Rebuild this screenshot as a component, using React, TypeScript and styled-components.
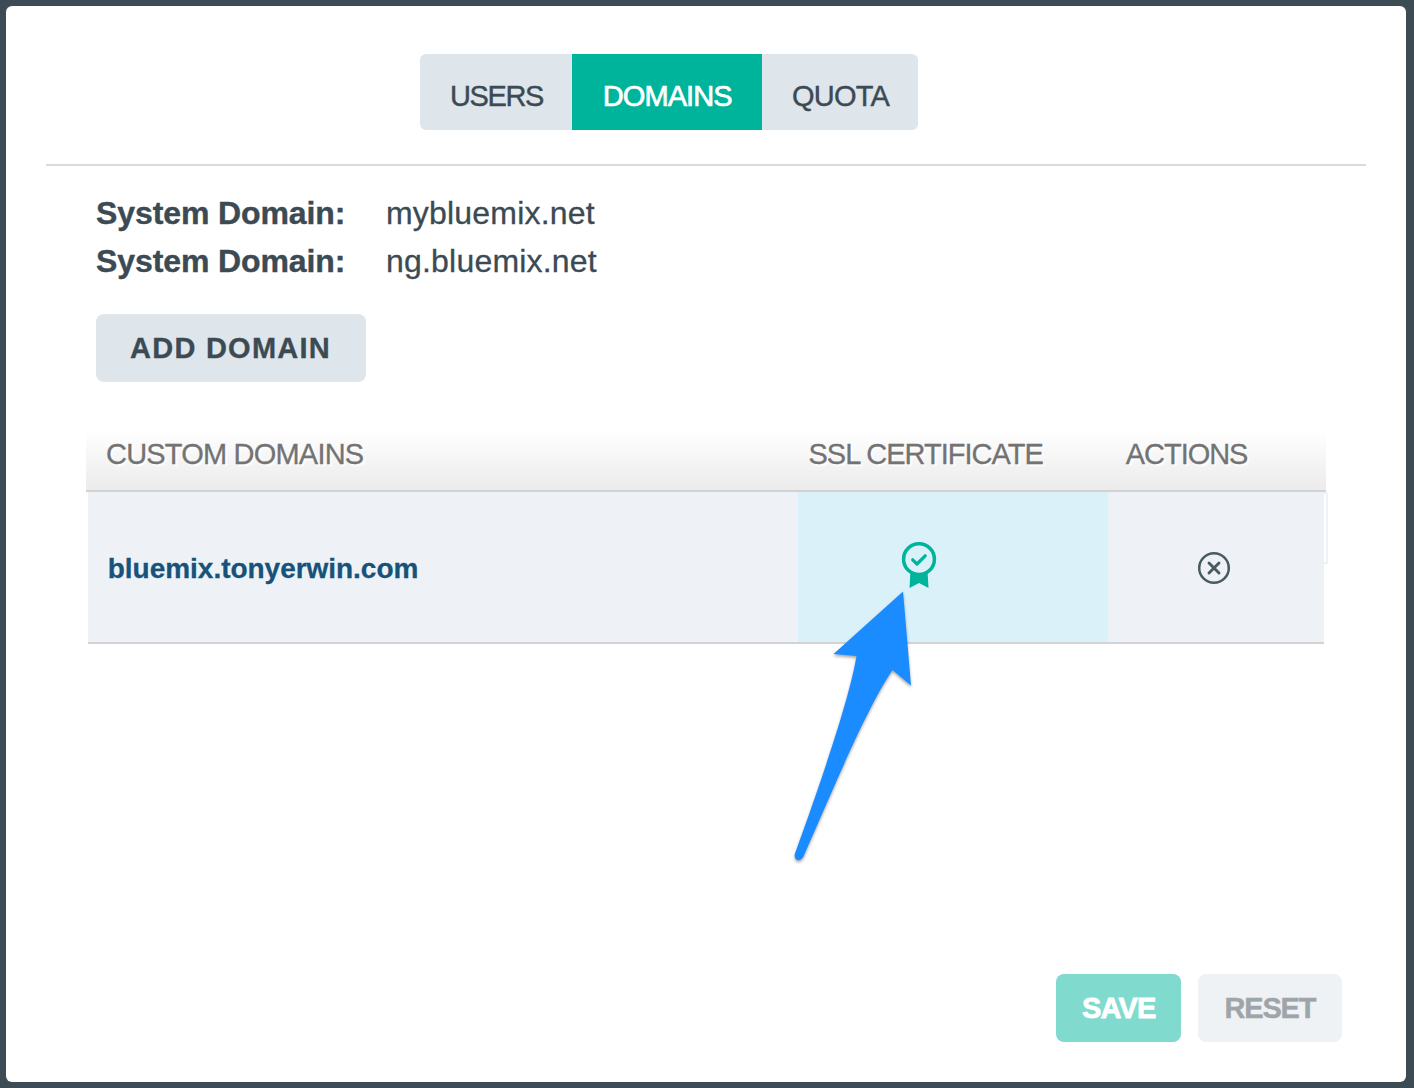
import React from "react";
import styled, { createGlobalStyle } from "styled-components";

const GlobalStyle = createGlobalStyle`
  *, *::before, *::after { box-sizing: border-box; }
  body {
    margin: 0;
    background: #3c4b54;
    font-family: "Liberation Sans", Arial, sans-serif;
    color: #3c4a53;
  }
  button { font-family: inherit; border: 0; margin: 0; padding: 0; color: inherit; cursor: pointer; }
`;

const Backdrop = styled.div`
  display: flex;
  height: 1088px;
  padding: 6px 8px 6px 6px;
  background: #3c4b54;
`;

const Panel = styled.main`
  position: relative;
  flex: 1;
  display: flex;
  flex-direction: column;
  background: #fff;
  border-radius: 6px;
  padding: 48px 40px 40px;
`;

const Label = styled.span<{ $spacing?: number; $shift?: number }>`
  letter-spacing: ${(p) => p.$spacing ?? 0}px;
  margin-left: ${(p) => p.$shift ?? 0}px;
  white-space: nowrap;
`;

const Tabs = styled.nav`
  display: flex;
  align-self: flex-start;
  height: 76px;
  margin-left: 374px;
  border-radius: 6px;
  overflow: hidden;
`;

const Tab = styled.button<{ $width: number; $active?: boolean }>`
  display: flex;
  align-items: center;
  width: ${(p) => p.$width}px;
  padding: 8px 0 0 30px;
  font-size: 29px;
  line-height: 34px;
  background: ${(p) => (p.$active ? "#00b39b" : "#dee5eb")};
  color: ${(p) => (p.$active ? "#fff" : "#3c4a53")};
  -webkit-text-stroke: ${(p) => (p.$active ? "0.7px #fff" : "0.4px #3c4a53")};
`;

const Divider = styled.hr`
  width: 1320px;
  height: 2px;
  margin: 34px 0 0;
  border: 0;
  background: #d6dbe0;
`;

const SystemDomains = styled.dl`
  display: grid;
  grid-template-columns: 290px auto;
  grid-auto-rows: 48px;
  margin: 23px 0 0 50px;
  font-size: 32px;
  line-height: 48px;
`;

const Term = styled.dt`
  font-weight: 700;
  -webkit-text-stroke: 0.4px #3c4a53;
`;

const Value = styled.dd`
  margin: 0;
  -webkit-text-stroke: 0.3px #3c4a53;
`;

const AddButton = styled.button`
  display: flex;
  align-items: center;
  width: 270px;
  height: 68px;
  margin: 29px 0 0 50px;
  padding-left: 34px;
  border-radius: 8px;
  background: #dee5eb;
  font-size: 29px;
  font-weight: 700;
  -webkit-text-stroke: 0.3px #3c4a53;
`;

const Table = styled.section`
  width: 1242px;
  margin: 48px 0 0 40px;
`;

const HeaderRow = styled.div`
  display: grid;
  grid-template-columns: 702px 317px 1fr;
  align-items: center;
  width: 1240px;
  height: 62px;
  padding: 0 0 12px 20px;
  border-bottom: 2px solid #d2d2d2;
  background: linear-gradient(#fff, #ebebeb);
  color: #737373;
  font-size: 29px;
  line-height: 34px;
  text-shadow: 2px 2px 2px #fff;
  -webkit-text-stroke: 0.3px #737373;
`;

const BodyRow = styled.div`
  display: flex;
  align-items: flex-start;
  padding-left: 2px;
`;

const Cell = styled.div<{ $width: number; $tint?: boolean; $indent: number; $top?: number }>`
  display: flex;
  align-items: center;
  width: ${(p) => p.$width}px;
  height: 152px;
  padding: ${(p) => p.$top ?? 0}px 0 0 ${(p) => p.$indent}px;
  border-bottom: 2px solid #d2d3d4;
  background: ${(p) => (p.$tint ? "#daf1f9" : "#eef2f7")};
`;

const DomainName = styled.span`
  font-size: 28px;
  font-weight: 700;
  line-height: 34px;
  color: #17527a;
  -webkit-text-stroke: 0.3px #17527a;
`;

const RowEdge = styled.div`
  width: 4px;
  height: 72px;
  border: 2px solid #eef2f7;
  border-left: 0;
`;

const Footer = styled.footer`
  display: flex;
  justify-content: flex-end;
  gap: 17px;
  margin: auto 24px 0 0;
`;

const FooterButton = styled.button<{ $primary?: boolean; $width: number }>`
  display: flex;
  align-items: center;
  width: ${(p) => p.$width}px;
  height: 68px;
  padding-left: 26px;
  border-radius: 8px;
  background: ${(p) => (p.$primary ? "#80dacd" : "#eef2f5")};
  color: ${(p) => (p.$primary ? "#fff" : "#9ea5a9")};
  font-size: 29px;
  font-weight: 700;
  -webkit-text-stroke: ${(p) => (p.$primary ? "0.8px #fff" : "0.4px #9ea5a9")};
`;

const Pointer = styled.svg`
  position: absolute;
  left: 774px;
  top: 574px;
  filter: drop-shadow(0 2px 1.5px rgba(0, 0, 0, 0.35));
  pointer-events: none;
`;

const CertificateIcon = () => (
  <svg width="36" height="50" viewBox="0 0 36 50" fill="none">
    <circle cx="18" cy="17.2" r="15.4" stroke="#00b39b" strokeWidth="3.5" />
    <path d="M11.700 17.800l4.300 4.200 8.200-8.200" stroke="#00b39b" strokeWidth="3.2" strokeLinecap="round" strokeLinejoin="round" />
    <path d="M9.500 28.500q8.500 6 17 0l1 17.500L18 41 8.500 46z" fill="#00b39b" />
  </svg>
);

const RemoveIcon = () => (
  <svg width="34" height="34" viewBox="0 0 34 34" fill="none" stroke="#4a5a63">
    <circle cx="17" cy="17" r="14.8" strokeWidth="2.5" />
    <path d="M12 12l10 10M22 12L12 22" strokeWidth="2.9" strokeLinecap="round" />
  </svg>
);

export default function App() {
  return (
    <>
      <GlobalStyle />
      <Backdrop>
        <Panel>
          <Tabs>
            <Tab $width={152}><Label $spacing={-1.4}>USERS</Label></Tab>
            <Tab $width={190} $active><Label $spacing={-0.9} $shift={0.7}>DOMAINS</Label></Tab>
            <Tab $width={156}><Label $spacing={-0.8}>QUOTA</Label></Tab>
          </Tabs>
          <Divider />
          <SystemDomains>
            <Term><Label $spacing={-0.1}>System Domain:</Label></Term>
            <Value><Label $spacing={0.2}>mybluemix.net</Label></Value>
            <Term><Label $spacing={-0.1}>System Domain:</Label></Term>
            <Value><Label $spacing={0.2}>ng.bluemix.net</Label></Value>
          </SystemDomains>
          <AddButton><Label $spacing={1.25}>ADD DOMAIN</Label></AddButton>
          <Table>
            <HeaderRow>
              <Label $spacing={-0.8}>CUSTOM DOMAINS</Label>
              <Label $spacing={-1} $shift={0.5}>SSL CERTIFICATE</Label>
              <Label $spacing={-1.05} $shift={0.8}>ACTIONS</Label>
            </HeaderRow>
            <BodyRow>
              <Cell $width={710} $indent={19} $top={4}>
                <DomainName><Label $shift={0.8} $spacing={-0.03}>bluemix.tonyerwin.com</Label></DomainName>
              </Cell>
              <Cell $width={310} $indent={103} $tint><CertificateIcon /></Cell>
              <Cell $width={216} $indent={89} $top={2}><RemoveIcon /></Cell>
              <RowEdge />
            </BodyRow>
          </Table>
          <Footer>
            <FooterButton $primary $width={125}><Label $spacing={-0.8}>SAVE</Label></FooterButton>
            <FooterButton $width={144}><Label $spacing={-1.2} $shift={0.5}>RESET</Label></FooterButton>
          </Footer>
          <Pointer width="150" height="290" viewBox="0 0 150 290">
            <path
              d="M123 11.500L131 105.500L112.500 90C88 126 57 200 23.500 276.500C20 283 13 280.500 15 273.500C41 202 70 117 76.500 76L53.500 74Z"
              fill="#1a8cff"
            />
          </Pointer>
        </Panel>
      </Backdrop>
    </>
  );
}
